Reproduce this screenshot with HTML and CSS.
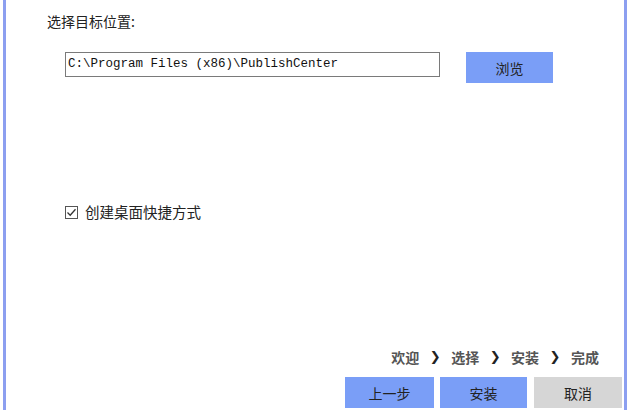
FILE: index.html
```html
<!DOCTYPE html>
<html>
<head>
<meta charset="utf-8">
<link rel="stylesheet" href="styles.css">
</head>
<body>
<div class="window">
  <div class="label">选择目标位置:</div>
  <div class="path-row">
    <div class="path-input">C:\Program Files (x86)\PublishCenter</div>
    <div class="btn btn-blue btn-browse">浏览</div>
  </div>
  <div class="check-row">
    <svg class="checkbox" width="13" height="13" viewBox="0 0 13 13">
      <rect x="0.5" y="0.5" width="12" height="12" fill="#fff" stroke="#555"/>
      <path d="M2.5 6.5 L5.2 9.2 L10.5 3.2" fill="none" stroke="#333" stroke-width="1.3"/>
    </svg>
    <span class="check-text">创建桌面快捷方式</span>
  </div>
  <div class="spacer"></div>
  <div class="steps">
    <span>欢迎</span><span class="arrow">❯</span>
    <span>选择</span><span class="arrow">❯</span>
    <span>安装</span><span class="arrow">❯</span>
    <span>完成</span>
  </div>
  <div class="buttons">
    <div class="btn btn-blue">上一步</div>
    <div class="btn btn-blue">安装</div>
    <div class="btn btn-gray">取消</div>
  </div>
</div>
</body>
</html>
```
FILE: styles.css
```css
html, body {
  margin: 0;
  padding: 0;
  background: #fff;
}
body {
  font-family: "Noto Sans CJK SC", "Noto Sans", sans-serif;
  color: #222;
}
.window {
  box-sizing: border-box;
  margin-left: 3px;
  width: 624px;
  height: 410px;
  border-left: 3px solid #8c9ff0;
  border-right: 3px solid #8c9ff0;
  display: flex;
  flex-direction: column;
  background: #fff;
}
.label {
  margin-top: 11px;
  padding-left: 41px;
  font-size: 14px;
  line-height: 20px;
  height: 20px;
}
.path-row {
  margin-top: 21px;
  padding-left: 59px;
  display: flex;
  align-items: flex-start;
}
.path-input {
  box-sizing: border-box;
  width: 375px;
  height: 25px;
  border: 1px solid #7a7a7a;
  font-family: "Liberation Mono", monospace;
  font-size: 12.5px;
  line-height: 23px;
  padding-left: 2px;
  color: #111;
  white-space: nowrap;
}
.btn {
  box-sizing: border-box;
  height: 31px;
  display: flex;
  align-items: center;
  justify-content: center;
  font-size: 14px;
  color: #222;
}
.btn-blue {
  background: #7a9ef7;
}
.btn-gray {
  background: #d6d6d6;
}
.btn-browse {
  margin-left: 26px;
  width: 87px;
}
.check-row {
  margin-top: 119px;
  padding-left: 59px;
  display: flex;
  align-items: center;
  height: 20px;
}
.checkbox {
  display: block;
}
.check-text {
  margin-left: 7px;
  font-size: 14.5px;
  line-height: 20px;
}
.spacer {
  flex: 1;
}
.steps {
  display: flex;
  justify-content: flex-end;
  align-items: center;
  padding-right: 25px;
  font-size: 14px;
  font-weight: bold;
  color: #555;
  line-height: 20px;
  height: 20px;
  gap: 10.5px;
}
.steps .arrow {
  color: #222;
  font-family: "DejaVu Sans", sans-serif;
  font-size: 13px;
}
.buttons {
  margin-top: 10px;
  margin-bottom: 2px;
  display: flex;
  justify-content: flex-end;
  padding-right: 2px;
  gap: 6px;
}
.buttons .btn:nth-child(1) { width: 89px; }
.buttons .btn:nth-child(2) { width: 87px; margin-right: 1px; }
.buttons .btn:nth-child(3) { width: 88px; }
```
